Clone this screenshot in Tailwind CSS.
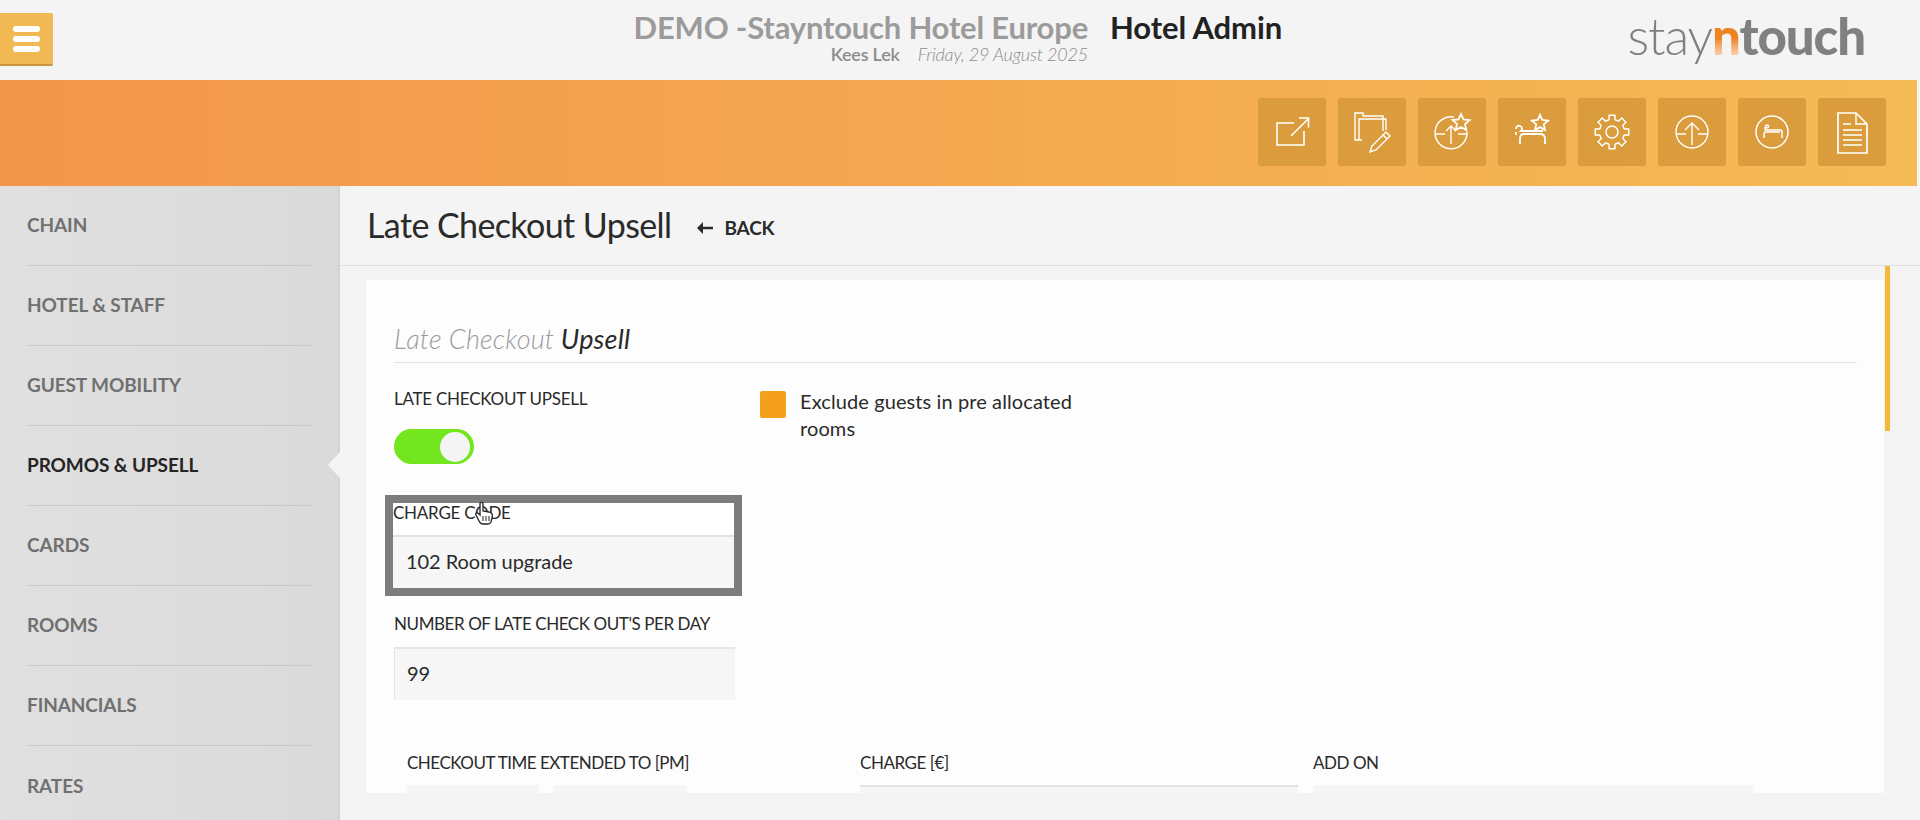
<!DOCTYPE html>
<html lang="en">
<head>
<meta charset="utf-8">
<script src="https://cdn.jsdelivr.net/npm/@tailwindcss/browser@4"></script>
<title>Late Checkout Upsell</title>
</head>
<body class="m-0 h-[820px] w-[1920px] overflow-hidden bg-[#f4f4f4] font-['Lato','Noto_Sans',sans-serif] text-[#2a2a2a]">
<header class="flex h-20 items-start bg-[#f4f4f4]">
  <button class="mt-[13px] flex h-[53px] w-[53px] flex-col items-center justify-center gap-[4px] rounded-r-[2px] border-b-2 border-[#c9963f] bg-[#f0b954]">
    <span class="h-[6px] w-[27px] rounded-full bg-white"></span>
    <span class="h-[6px] w-[27px] rounded-full bg-white"></span>
    <span class="h-[6px] w-[27px] rounded-full bg-white"></span>
  </button>
  <div class="ml-[582px] flex items-start pt-[11px]">
    <div class="flex w-[453px] flex-col items-end">
      <div class="whitespace-nowrap text-[31px] leading-[32px] font-bold tracking-[-0.2px] text-[#9b9b9b]">DEMO -Stayntouch Hotel Europe</div>
      <div class="mt-[1px] flex gap-[18px] text-[18px] leading-[20px] text-[#8c8c8c]">
        <span class="font-semibold tracking-[-0.2px]">Kees Lek</span>
        <span class="font-light italic tracking-[-0.2px]">Friday, 29 August 2025</span>
      </div>
    </div>
    <div class="ml-[22px] whitespace-nowrap text-[31px] leading-[32px] font-bold tracking-[-0.1px] text-[#222]">Hotel Admin</div>
  </div>
  <div class="ml-auto mr-[55px] mt-[5px] whitespace-nowrap text-[51px] leading-[62px] tracking-[-1.1px] text-[#808080]">
    <span class="font-light">stay</span><span class="bg-linear-to-b from-[#ee8420] from-55% to-[#f8d8b8] to-85% bg-clip-text font-black text-transparent">n</span><span class="font-black">touch</span>
  </div>
</header>

<div class="mr-[3px] flex h-[106px] items-start justify-end gap-3 bg-linear-to-r from-[#f3964c] to-[#f4ba54] pr-[31px] pt-[18px]">
  <a class="flex h-[68px] w-[68px] items-center justify-center rounded-[3px] bg-[#da9c3c]">
    <svg class="h-[40px] w-[40px]" viewBox="0 0 40 40" fill="none" stroke="#fff" stroke-width="1.6"><path d="M22 11H5v22h27V19"/><path d="M19 24 36 7M27 6h9.500v9.500"/></svg>
  </a>
  <a class="flex h-[68px] w-[68px] items-center justify-center rounded-[3px] bg-[#da9c3c]">
    <svg class="h-[44px] w-[44px]" viewBox="0 0 44 44" fill="none" stroke="#fff" stroke-width="1.4"><path d="M12 30H5V3h8v3h20v15"/><path d="M9 30V9h27v11"/><path d="m22 36 14-14 4 4-14 14-6 2z"/><path d="m33 25 4 4"/></svg>
  </a>
  <a class="flex h-[68px] w-[68px] items-center justify-center rounded-[3px] bg-[#da9c3c]">
    <svg class="h-[40px] w-[40px]" viewBox="0 0 40 40" fill="none" stroke="#fff" stroke-width="1.4"><path d="M22 5A16 16 0 1 0 35 20"/><path d="M4 22h9M26 22h9M19 32V14m-5 5 5-5 5 5"/><path d="m29 2 2.500 5.500 6 .6-4.500 4 1.300 6L29 15l-5.300 3 1.300-6-4.500-4 6-.6z" stroke-width="1.800" fill="#da9c3c"/></svg>
  </a>
  <a class="flex h-[68px] w-[68px] items-center justify-center rounded-[3px] bg-[#da9c3c]">
    <svg class="h-[40px] w-[40px]" viewBox="0 0 40 40" fill="none" stroke="#fff" stroke-width="1.800"><path d="M4 17a3 3 0 1 1 5 2h22"/><path d="M8 32v-5c0-3 1-5 4-5h16c3 0 5 2 5 5v5"/><path d="M4 20v3"/><path d="m28 3 2.300 5 5.700.6-4.200 3.700 1.200 5.700-5-2.900-5 2.900 1.200-5.700-4.200-3.700 5.700-.6z" fill="#da9c3c"/></svg>
  </a>
  <a class="flex h-[68px] w-[68px] items-center justify-center rounded-[3px] bg-[#da9c3c]">
    <svg class="h-[36px] w-[36px]" viewBox="0 0 36 36" fill="none" stroke="#fff" stroke-width="1.500" stroke-linejoin="round">
      <circle cx="18" cy="18" r="6"/>
      <path d="M14.980 5.870 15.050 1.260h5.900l.07 4.610A12.500 12.500 0 0 1 24.440 7.290"/>
      <path transform="rotate(45 18 18)" d="M14.980 5.870 15.050 1.260h5.900l.07 4.610A12.500 12.500 0 0 1 24.440 7.290"/>
      <path transform="rotate(90 18 18)" d="M14.980 5.870 15.050 1.260h5.900l.07 4.610A12.500 12.500 0 0 1 24.440 7.290"/>
      <path transform="rotate(135 18 18)" d="M14.980 5.870 15.050 1.260h5.900l.07 4.610A12.500 12.500 0 0 1 24.440 7.290"/>
      <path transform="rotate(180 18 18)" d="M14.980 5.870 15.050 1.260h5.900l.07 4.610A12.500 12.500 0 0 1 24.440 7.290"/>
      <path transform="rotate(225 18 18)" d="M14.980 5.870 15.050 1.260h5.900l.07 4.610A12.500 12.500 0 0 1 24.440 7.290"/>
      <path transform="rotate(270 18 18)" d="M14.980 5.870 15.050 1.260h5.900l.07 4.610A12.500 12.500 0 0 1 24.440 7.290"/>
      <path transform="rotate(315 18 18)" d="M14.980 5.870 15.050 1.260h5.900l.07 4.610A12.500 12.500 0 0 1 24.440 7.290"/>
    </svg>
  </a>
  <a class="flex h-[68px] w-[68px] items-center justify-center rounded-[3px] bg-[#da9c3c]">
    <svg class="h-[36px] w-[36px]" viewBox="0 0 36 36" fill="none" stroke="#fff" stroke-width="1.400"><circle cx="18" cy="18" r="16"/><path d="M2 20h10M24 20h10M18 31V9m-7 7 7-7 7 7"/></svg>
  </a>
  <a class="flex h-[68px] w-[68px] items-center justify-center rounded-[3px] bg-[#da9c3c]">
    <svg class="h-[36px] w-[36px]" viewBox="0 0 36 36" fill="none" stroke="#fff" stroke-width="1.500"><circle cx="18" cy="18" r="16"/><path d="M11 13v3h15c1 0 2 1 2 2v6M10 24v-4c0-1 1-2 2-2h14"/><circle cx="13" cy="12.500" r="1.500"/></svg>
  </a>
  <a class="flex h-[68px] w-[68px] items-center justify-center rounded-[3px] bg-[#da9c3c]">
    <svg class="h-[44px] w-[44px]" viewBox="0 0 44 44" fill="none" stroke="#fff" stroke-width="1.400"><path d="M8 3h18l11 11v29H8z" stroke-width="1.700"/><path d="M26 3v11h11M13 14h8M13 20h19M13 25h19M13 30h19M13 35h19"/></svg>
  </a>
</div>

<div class="flex h-[634px]">
  <nav class="relative w-[340px] shrink-0 bg-linear-to-r from-[#e0e0e0] to-[#dadada] pl-[27px] pr-[28px] text-[19px] font-bold tracking-[-0.1px] text-[#707070] shadow-[inset_-2px_0_2px_rgba(0,0,0,0.04)]">
    <a class="flex h-[80px] items-center border-b border-[#c9c9c9]">CHAIN</a>
    <a class="flex h-[80px] items-center border-b border-[#c9c9c9]">HOTEL &amp; STAFF</a>
    <a class="flex h-[80px] items-center border-b border-[#c9c9c9]">GUEST MOBILITY</a>
    <a class="flex h-[80px] items-center border-b border-[#c9c9c9] text-[#252525]">PROMOS &amp; UPSELL</a>
    <a class="flex h-[80px] items-center border-b border-[#c9c9c9]">CARDS</a>
    <a class="flex h-[80px] items-center border-b border-[#c9c9c9]">ROOMS</a>
    <a class="flex h-[80px] items-center border-b border-[#c9c9c9]">FINANCIALS</a>
    <a class="flex h-[80px] items-center">RATES</a>
    <span class="absolute left-[328px] top-[266px] h-0 w-0 border-y-[13px] border-r-[12px] border-y-transparent border-r-[#f4f4f4]"></span>
  </nav>

  <main class="relative min-w-0 flex-1">
    <div class="flex h-[80px] items-center border-b border-[#dedede] pb-[2px] pl-[27px]">
      <h1 class="text-[34px] leading-[40px] font-normal tracking-[-0.6px] text-[#2a2a2a]">Late Checkout Upsell</h1>
      <a class="ml-[26px] mt-[7px] flex items-center gap-[11px] text-[19px] font-bold tracking-[-0.2px] text-[#2a2a2a]">
        <svg class="h-[12px] w-[16px]" viewBox="0 0 16 12" fill="#2a2a2a"><path d="M6 0v4.700h10v2.600H6V12L0 6z"/></svg>
        BACK
      </a>
    </div>

    <div class="pl-[26px] pt-[14px]">
      <section class="h-[513px] w-[1518px] overflow-hidden bg-[#fdfdfd] pl-[28px] pr-[27px]">
        <h2 class="mt-[29px] h-[54px] border-b border-[#e4e4e4] pt-[14px] text-[27px] leading-[32px] font-normal tracking-[0.2px] italic">
          <span class="font-light text-[#9c9c9c]">Late Checkout</span> <span class="text-[#2a2a2a]">Upsell</span>
        </h2>
        <div class="flex">
          <div class="w-[366px]">
            <label class="mt-[24px] block text-[17px] leading-[24px] tracking-[-0.25px]">LATE CHECKOUT UPSELL</label>
            <div class="mt-[18px] flex h-[35px] w-[80px] items-center justify-end rounded-full bg-[#73e620] pr-[4px]"><span class="h-[30px] w-[30px] rounded-full bg-[#f4f4f4]"></span></div>
            <div class="-ml-[9px] mt-[31px] w-[357px] border-8 border-[#7d7d80] bg-white">
              <label class="block h-[32px] text-[17px] leading-[20px] tracking-[-0.25px]">CHARGE CODE</label>
              <div class="flex h-[53px] items-center border-t-2 border-[#e2e2e2] bg-[#f6f6f6] pb-[4px] pl-[13px] text-[20px] tracking-[-0.05px]">102 Room upgrade</div>
            </div>
            <label class="mt-[16px] block text-[17px] leading-[24px] tracking-[-0.42px]">NUMBER OF LATE CHECK OUT'S PER DAY</label>
            <div class="mt-[11px] flex h-[53px] w-[341px] items-center border-t-2 border-l border-[#e6e6e6] bg-[#f6f6f6] pb-[4px] pl-[12px] text-[20px]">99</div>
          </div>
          <div class="ml-0 flex items-start pt-[28px]">
            <span class="h-[27px] w-[26px] rounded-[2px] bg-[#f5a01d]"></span>
            <p class="-mt-[3px] ml-[14px] w-[300px] text-[20px] leading-[27px] tracking-[0.1px]">Exclude guests in pre allocated rooms</p>
          </div>
        </div>
        <div class="mt-[51px] flex pl-[13px]">
          <div class="w-[453px]">
            <label class="block text-[17px] leading-[24px] tracking-[-0.5px]">CHECKOUT TIME EXTENDED TO [PM]</label>
            <div class="mt-[10px] flex gap-[14px]">
              <div class="h-[53px] w-[132px] bg-[#f6f6f6]"></div>
              <div class="h-[53px] w-[134px] bg-[#f6f6f6]"></div>
            </div>
          </div>
          <div class="w-[453px]">
            <label class="block text-[17px] leading-[24px] tracking-[-0.45px]">CHARGE [€]</label>
            <div class="mt-[10px] h-[53px] w-[438px] border-t-2 border-[#e2e2e2] bg-[#f6f6f6]"></div>
          </div>
          <div class="w-[440px]">
            <label class="block text-[17px] leading-[24px] tracking-[-0.45px]">ADD ON</label>
            <div class="mt-[10px] h-[53px] w-[440px] bg-[#f6f6f6]"></div>
          </div>
        </div>
      </section>
    </div>

    <span class="absolute left-[1545px] top-[80px] h-[165px] w-[5px] bg-[#f5b93a]"></span>
    <svg class="absolute left-[134px] top-[315px] h-[24px] w-[20px]" viewBox="0 0 20 24"><path d="M6 2c1-1 3-1 3 1v7l6 1c3 1 4 2 3 6l-1 4c-1 2-2 2-3 2H9c-2 0-3-1-4-3l-3-6c-1-2 1-3 3-1l1 1z" fill="#fff" stroke="#222" stroke-width="1.300"/><path d="M9 15v5M12 15v5M15 15v5" stroke="#222" stroke-width="1"/></svg>
  </main>
</div>
</body>
</html>
